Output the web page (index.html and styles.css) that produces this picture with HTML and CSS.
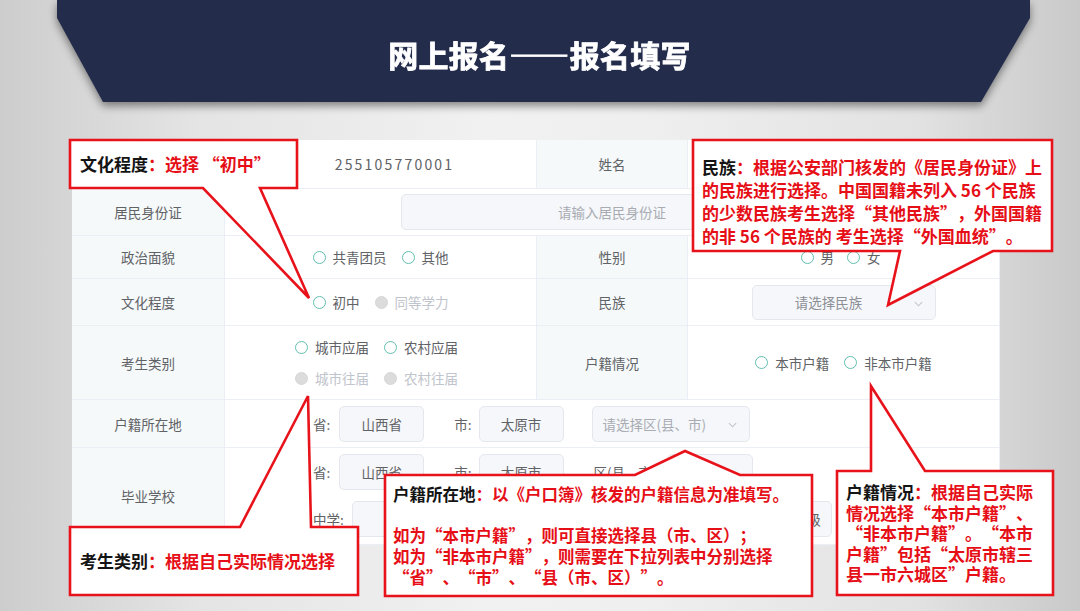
FILE: index.html
```html
<!DOCTYPE html>
<html lang="zh-CN">
<head>
<meta charset="utf-8">
<title>网上报名——报名填写</title>
<link rel="stylesheet" href="styles.css">
</head>
<body>
<div class="stage">
  <header class="banner-wrap">
    <div class="banner"><h1 class="title">网上报名——报名填写</h1></div>
  </header>

  <section class="form">
    <div class="lbl"></div>
    <div class="val num">255105770001</div>
    <div class="lbl">姓名</div>
    <div class="val"></div>

    <div class="lbl">居民身份证</div>
    <div class="val wide"><div class="input id-input">请输入居民身份证</div></div>

    <div class="lbl">政治面貌</div>
    <div class="val"><div class="radios"><span class="radio"><i class="dot"></i>共青团员</span><span class="radio"><i class="dot"></i>其他</span></div></div>
    <div class="lbl">性别</div>
    <div class="val"><div class="radios tight"><span class="radio"><i class="dot"></i>男</span><span class="radio"><i class="dot"></i>女</span></div></div>

    <div class="lbl">文化程度</div>
    <div class="val"><div class="radios"><span class="radio"><i class="dot"></i>初中</span><span class="radio off"><i class="dot"></i>同等学力</span></div></div>
    <div class="lbl">民族</div>
    <div class="val"><div class="select nation">请选择民族<svg class="arrow" viewBox="0 0 10 6"><polyline points="1,1 5,5 9,1"/></svg></div></div>

    <div class="lbl">考生类别</div>
    <div class="val">
      <div class="radio-lines">
        <div class="radios"><span class="radio"><i class="dot"></i>城市应届</span><span class="radio"><i class="dot"></i>农村应届</span></div>
        <div class="radios"><span class="radio off"><i class="dot"></i>城市往届</span><span class="radio off"><i class="dot"></i>农村往届</span></div>
      </div>
    </div>
    <div class="lbl">户籍情况</div>
    <div class="val"><div class="radios"><span class="radio"><i class="dot"></i>本市户籍</span><span class="radio"><i class="dot"></i>非本市户籍</span></div></div>

    <div class="lbl">户籍所在地</div>
    <div class="val wide addr">
      <div class="addr-line">
        <span class="k">省:</span><span class="box">山西省</span>
        <span class="k gap">市:</span><span class="box">太原市</span>
        <span class="select district ph">请选择区(县、市)<svg class="arrow" viewBox="0 0 10 6"><polyline points="1,1 5,5 9,1"/></svg></span>
      </div>
    </div>

    <div class="lbl">毕业学校</div>
    <div class="val wide addr school">
      <div class="addr-line">
        <span class="k">省:</span><span class="box">山西省</span>
        <span class="k gap">市:</span><span class="box">太原市</span>
        <span class="k gap">区(县、市):</span><span class="box small">市</span>
      </div>
      <div class="addr-line">
        <span class="k">中学:</span><span class="box long"></span>
        <span class="box grade ph">级</span>
      </div>
    </div>
  </section>

  <svg class="callout-lines" viewBox="0 0 1080 611" width="1080" height="611">
    <path d="M70,140 H297 V188 H260 L309,298 L203,188 H70 Z"/>
    <path d="M693,140 H1052 V251 H993 L888,305 L900,251 H693 Z"/>
    <path d="M70,527 H240 L308,396 L311,527 H358 V595 H70 Z"/>
    <path d="M385,475 H635 L685,451 L740,475 H812 V596 H385 Z"/>
    <path d="M837,471 H871 L871,386 L925,471 H1053 V595 H837 Z"/>
  </svg>

  <div class="callout c-edu"><b>文化程度</b>：选择 “初中”</div>
  <div class="callout c-nation"><b>民族</b>：根据公安部门核发的《居民身份证》上<br>的民族进行选择。中国国籍未列入 56 个民族<br>的少数民族考生选择“其他民族”，外国国籍<br>的非 56 个民族的 考生选择“外国血统”。</div>
  <div class="callout c-type"><b>考生类别</b>：根据自己实际情况选择</div>
  <div class="callout c-addr"><b>户籍所在地</b>：以《户口簿》核发的户籍信息为准填写。<br><br>如为“本市户籍”，则可直接选择县（市、区）；<br>如为“非本市户籍”，则需要在下拉列表中分别选择<br>“省”、“市”、“县（市、区）”。</div>
  <div class="callout c-huji"><b>户籍情况</b>：根据自己实际<br>情况选择“本市户籍”、<br>“非本市户籍”。“本市<br>户籍”包括“太原市辖三<br>县一市六城区”户籍。</div>
</div>
</body>
</html>
```

FILE: styles.css
```css
* { box-sizing: border-box; }
html, body { margin: 0; padding: 0; }
body {
  width: 1080px;
  height: 611px;
  overflow: hidden;
  font-family: "Noto Sans CJK SC", "Noto Sans", sans-serif;
  text-spacing-trim: space-all;
  background: linear-gradient(90deg, #cdcdcd 0%, #e4e4e4 18%, #f1f1f1 45%, #efefef 60%, #e2e2e2 85%, #c9c9c9 100%);
}
.stage { position: relative; width: 1080px; height: 611px; }

.banner-wrap {
  width: 973px;
  margin-left: 57px;
  filter: drop-shadow(0 4px 4px rgba(0, 0, 0, 0.45));
}
.banner {
  height: 102px;
  background: #232d4b;
  clip-path: polygon(0 0, 973px 0, 973px 18px, 924px 102px, 46px 102px, 0 18px);
  display: flex;
  align-items: center;
  justify-content: center;
  padding: 6px 8px 0 0;
}
.title {
  margin: 0;
  color: #fff;
  font-size: 30px;
  font-weight: 700;
  letter-spacing: 0.3px;
  -webkit-text-stroke: 0.8px #fff;
}

.form {
  margin: 38px 0 0 72px;
  width: 928px;
  display: grid;
  grid-template-columns: 153px 312px 151px 312px;
  grid-template-rows: 49px 47px 43px 47px 74px 48px 97px;
  background: #fff;
  font-size: 13.5px;
  color: #606266;
}
.lbl, .val {
  border-right: 1px solid #ebeef5;
  border-bottom: 1px solid #ebeef5;
  display: flex;
  align-items: center;
  justify-content: center;
}
.lbl { background: #f5f9fa; }
.val { background: #fff; }
.wide { grid-column: 2 / 5; }
.num { letter-spacing: 2.2px; padding-left: 28px; font-size: 14px; }

.input, .select, .box {
  background: #f5f7fa;
  border: 1px solid #e4e7ed;
  border-radius: 5px;
  height: 36px;
  display: flex;
  align-items: center;
  justify-content: center;
}
.id-input { width: 422px; color: #a8abb2; }
.ph { color: #a8abb2; }
.select { position: relative; }
.nation { width: 184px; height: 35px; color: #8c8f96; padding-right: 30px; }
.arrow {
  position: absolute;
  right: 12px;
  top: 15px;
  width: 9px;
  height: 6px;
  fill: none;
  stroke: #c0c4cc;
  stroke-width: 1.2;
}

.radios { display: flex; align-items: center; gap: 15px; }
.radios.tight { gap: 13px; margin-left: -6px; }
.radio { display: inline-flex; align-items: center; gap: 7px; color: #606266; }
.dot {
  display: inline-block;
  width: 13px;
  height: 13px;
  border-radius: 50%;
  border: 1.3px solid #62bfae;
  background: #fff;
}
.radio.off { color: #c0c4cc; }
.radio.off .dot { border-color: #d6d6d6; background: #dcdcdc; }
.radio-lines { display: flex; flex-direction: column; gap: 11px; margin-left: -8px; }

.addr {
  padding-left: 88px;
  flex-direction: column;
  align-items: flex-start;
  justify-content: center;
}
.school { justify-content: flex-start; padding-top: 6px; gap: 11px; }
.addr-line { display: flex; align-items: center; }
.k { margin-right: 9px; color: #606266; }
.k.gap { margin-left: 30px; margin-right: 7px; }
.box { width: 85px; color: #606266; }
.district { width: 158px; margin-left: 28px; justify-content: flex-start; padding-left: 10px; }
.small { width: 86px; }
.long { width: 384px; margin-left: -1px; }
.grade { width: 86px; margin-left: 10px; justify-content: flex-end; padding-right: 10px; }

.callout-lines {
  position: absolute;
  left: 0;
  top: 0;
  pointer-events: none;
}
.callout-lines path {
  fill: #fff;
  stroke: #e8121b;
  stroke-width: 2.6;
  stroke-linejoin: miter;
}

.callout {
  position: absolute;
  font-size: 17px;
  font-weight: 700;
  color: #e60f17;
  white-space: nowrap;
}
.callout b { color: #141414; font-weight: 700; }
.c-edu { left: 80px; top: 152px; line-height: 24px; }
.c-nation { left: 702px; top: 155px; line-height: 23px; }
.c-type { left: 80px; top: 549px; line-height: 24px; }
.c-addr { left: 393px; top: 484px; line-height: 20.7px; font-size: 16.5px; }
.c-huji { left: 846px; top: 482px; line-height: 20.5px; }
```
